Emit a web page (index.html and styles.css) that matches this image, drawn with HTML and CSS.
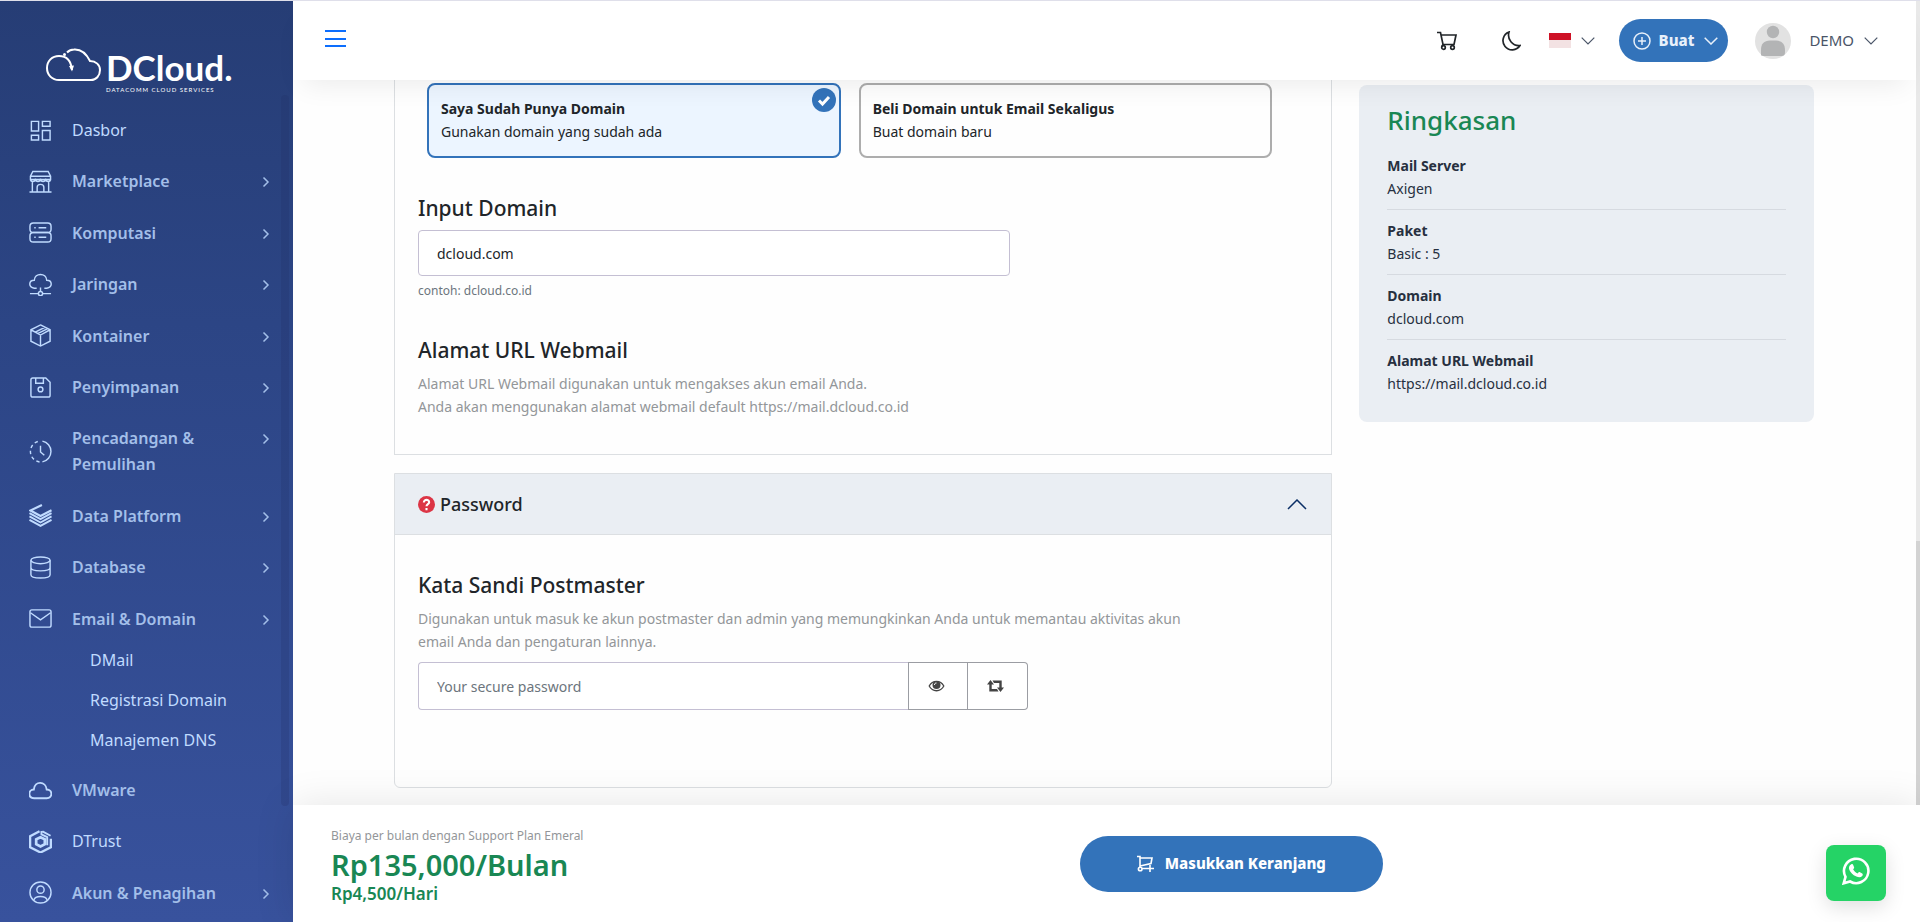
FILE: index.html
```html
<!DOCTYPE html>
<html lang="id">

<head>
    <meta charset="UTF-8">
    <meta name="viewport" content="width=device-width, initial-scale=1">
    <title>DCloud - DMail</title>
    <link rel="stylesheet" href="styles.css">
</head>

<body>

    <!-- shared icons -->
    <svg class="sprite" aria-hidden="true">
        <symbol id="right" viewBox="0 0 8 12"><path d="M1.5 1.5 6 6l-4.500 4.500" /></symbol>
        <symbol id="down" viewBox="0 0 14 8"><path d="m.7.7 6.300 6.300L13.300.7" /></symbol>
    </svg>

    <aside class="sidebar">
        <a class="logo" href="#">
            <svg class="logo-cloud" viewBox="0 0 56 34" aria-hidden="true">
                <path d="M26 22C25 12 20 8 13 8 6 8 1 13 1 20s5 12 12 12h32c5 0 9-4 9-10 0-5-4-9-10-9C40 5 35 1 28 1.500c-3 0-5 1-7 3" />
                <path class="solid" d="m23 18 3 5.500 2-6z" />
                <circle class="solid" cx="18.500" cy="6.500" r="1.500" />
            </svg>
            <span class="logo-text">
                <span class="logo-name">DCloud.</span>
                <span class="logo-tag">DATACOMM CLOUD SERVICES</span>
            </span>
        </a>

        <nav class="menu">
            <a class="item plain" href="#">
                <svg class="icon" viewBox="0 0 24 24"><path d="M2.500 2.500h7.500v10H2.500zM14 2.500h8v5h-8zM14 12h8v10h-8zM2.500 17h7.500v5H2.500z" /></svg>
                <span>Dasbor</span>
            </a>
            <a class="item" href="#">
                <svg class="icon" viewBox="0 0 24 24"><path d="M4 1.500h16l2.500 5v3.500H1.500V6.500zM1.500 6.500h21M1.500 9c0 4 5 4 5.200 0 .3 4 5 4 5.300 0 .3 4 5 4 5.300 0 .3 4 5.200 4 5.200 0M3.500 12v11M20.500 12v11M.5 23h23M8.500 23v-5c0-4 7-4 7 0v5" /></svg>
                <span>Marketplace</span>
                <svg class="arrow"><use href="#right" /></svg>
            </a>
            <a class="item" href="#">
                <svg class="icon" viewBox="0 0 24 24"><rect x="1" y="2" width="22" height="10" rx="3.500" /><rect x="1" y="12" width="22" height="10" rx="3.500" /><path d="M5.500 7H7M10 7h8M5.500 17H7M10 17h8" /></svg>
                <span>Komputasi</span>
                <svg class="arrow"><use href="#right" /></svg>
            </a>
            <a class="item" href="#">
                <svg class="icon" viewBox="0 0 24 24"><path d="M8 16H5.500C-1 15-.5 7.500 5.500 7.500 6-.5 18-.5 18.500 7.500c6 0 6.500 7.500 0 8.500H16M12 15v4M1 21.500h8.500M14.500 21.500H23" /><circle cx="12" cy="21.500" r="2.200" /></svg>
                <span>Jaringan</span>
                <svg class="arrow"><use href="#right" /></svg>
            </a>
            <a class="item" href="#">
                <svg class="icon" viewBox="0 0 24 24"><path d="m12 1 10 5v12l-10 5-10-5V6zM2 6l10 5.500L22 6M12 11.500V23M6.500 8.500l10-5M9 10l10-5" /></svg>
                <span>Kontainer</span>
                <svg class="arrow"><use href="#right" /></svg>
            </a>
            <a class="item" href="#">
                <svg class="icon" viewBox="0 0 24 24"><path d="M4 2h13.500L22 6.500V20a2 2 0 0 1-2 2H4a2 2 0 0 1-2-2V4a2 2 0 0 1 2-2zM7 2v5.500h8V2" /><circle cx="12" cy="14" r="2.500" /></svg>
                <span>Penyimpanan</span>
                <svg class="arrow"><use href="#right" /></svg>
            </a>
            <a class="item" href="#">
                <svg class="icon" viewBox="0 0 24 24"><path d="M14 1.200A11 11 0 0 1 14 22.800M12 6v6.500l4 3.500" /><path stroke-dasharray="3.500 3" d="M11 22.900A11 11 0 0 1 11 1.100" /></svg>
                <span>Pencadangan &amp; Pemulihan</span>
                <svg class="arrow"><use href="#right" /></svg>
            </a>
            <a class="item" href="#">
                <svg class="icon" viewBox="0 0 24 24"><path stroke-width="2.200" d="M13.500 1 1.500 6.800 12 12.500 23.500 6.500" /><path stroke-width="2" d="m.5 9.500 11.500 6.300L23.500 9.500M.5 13l11.500 6.300L23.500 13M.5 16.500 12 22.800l11.500-6.300" /></svg>
                <span>Data Platform</span>
                <svg class="arrow"><use href="#right" /></svg>
            </a>
            <a class="item" href="#">
                <svg class="icon" viewBox="0 0 24 24"><ellipse cx="12" cy="4.500" rx="10" ry="3.500" /><path d="M2 4.500v15c0 4.700 20 4.700 20 0v-15M2 12c0 4.700 20 4.700 20 0" /></svg>
                <span>Database</span>
                <svg class="arrow"><use href="#right" /></svg>
            </a>
            <div class="group">
                <a class="item" href="#">
                    <svg class="icon" viewBox="0 0 24 24"><rect x="1" y="3" width="22" height="18" rx="2" /><path d="m1.500 6 10.500 7.500L22.500 6" /></svg>
                    <span>Email &amp; Domain</span>
                    <svg class="arrow"><use href="#right" /></svg>
                </a>
                <div class="submenu">
                    <a href="#">DMail</a>
                    <a href="#">Registrasi Domain</a>
                    <a href="#">Manajemen DNS</a>
                </div>
            </div>
            <a class="item" href="#">
                <svg class="icon" viewBox="0 0 24 24"><path stroke-width="2" d="M5.500 20C-1.500 20-1 11 5 11 6 1.500 17.500 2 18.500 11c6.500 0 6.500 9 0 9z" /></svg>
                <span>VMware</span>
            </a>
            <a class="item plain" href="#">
                <svg class="icon" viewBox="0 0 24 24"><path stroke-width="2.400" d="M22.800 9v9L12 23.500 1.200 18V6.500L11 1.300" /><path stroke-width="2.800" d="m12 7.500-4.500 2.300v5L12 17.200l4.500-2.400v-5z" /><path stroke-width="2" d="M13 1v3.500l6 3V16M14 1.500l8.500 4.500" /></svg>
                <span>DTrust</span>
            </a>
            <a class="item" href="#">
                <svg class="icon" viewBox="0 0 24 24"><circle cx="12" cy="12" r="11" /><circle cx="12" cy="9" r="3.800" /><path d="M5 20c1.500-5 12.500-5 14 0" /></svg>
                <span>Akun &amp; Penagihan</span>
                <svg class="arrow"><use href="#right" /></svg>
            </a>
        </nav>
        <div class="sidebar-scroll"></div>
    </aside>

    <div class="page">
        <header class="header">
            <button class="icon-btn menu-toggle" aria-label="Menu">
                <svg class="burger" viewBox="0 0 21 18"><path d="M0 2h21M0 10h21M0 17h21" /></svg>
            </button>
            <div class="tools">
                <button class="icon-btn cart" aria-label="Keranjang">
                    <svg viewBox="0 0 20 20"><path d="M0 1.500h3.500L6 13.500h11L19 4H4M6 13.500l-1 2" /><circle cx="6.500" cy="16.500" r="1.800" /><circle cx="15.500" cy="16.500" r="1.800" /></svg>
                </button>
                <button class="icon-btn moon" aria-label="Mode gelap">
                    <svg viewBox="0 0 20 20"><path d="M8 1A9.200 9.200 0 1 0 19 14.500 10.500 10.500 0 0 1 8 1z" /></svg>
                </button>
                <button class="icon-btn lang" aria-label="Bahasa">
                    <span class="flag"></span>
                    <svg class="down"><use href="#down" /></svg>
                </button>
                <button class="create">
                    <svg class="plus" viewBox="0 0 18 18"><circle cx="9" cy="9" r="8" /><path d="M9 5v8M5 9h8" /></svg>
                    Buat
                    <svg class="down"><use href="#down" /></svg>
                </button>
                <button class="icon-btn user">
                    <svg class="avatar" viewBox="0 0 36 36"><circle cx="18" cy="18" r="18" fill="#e2e2e2" /><circle cx="18" cy="9" r="6.200" fill="#b3b4b5" /><path d="M6 32V27c0-6 3-9.500 9-9.500h6c6 0 9 3.500 9 9.500v2c0 3-1 4-4 4H10c-2.500 0-4-.3-4-1z" fill="#b3b4b5" /></svg>
                    DEMO
                    <svg class="down"><use href="#down" /></svg>
                </button>
            </div>
        </header>

        <main class="content">
            <form class="steps">
                <section class="card">
                    <div class="options">
                        <label class="option selected">
                            <input type="radio" name="domain_type" checked>
                            <b>Saya Sudah Punya Domain</b>
                            <span>Gunakan domain yang sudah ada</span>
                            <svg class="check" viewBox="0 0 24 24"><circle cx="12" cy="12" r="12" /><path d="m7 12.500 3.500 3.500L17 9" /></svg>
                        </label>
                        <label class="option">
                            <input type="radio" name="domain_type">
                            <b>Beli Domain untuk Email Sekaligus</b>
                            <span>Buat domain baru</span>
                        </label>
                    </div>

                    <label class="title" for="domain">Input Domain</label>
                    <input class="field" id="domain" type="text" value="dcloud.com">
                    <small class="hint">contoh: dcloud.co.id</small>

                    <h2 class="title">Alamat URL Webmail</h2>
                    <p class="desc">Alamat URL Webmail digunakan untuk mengakses akun email Anda.<br>
                        Anda akan menggunakan alamat webmail default https://mail.dcloud.co.id</p>
                </section>

                <section class="card accordion">
                    <button class="accordion-head" type="button">
                        <svg class="question" viewBox="0 0 18 18"><circle cx="9" cy="9" r="9" /><path d="M6.200 7c0-4 5.800-3.600 5.600-.3C11.700 8.600 9 8.600 9 10.800M9 12.800V15" /></svg>
                        Password
                        <svg class="up" viewBox="0 0 20 11"><path d="m1 10 9-9 9 9" /></svg>
                    </button>
                    <div class="accordion-body">
                        <label class="title" for="password">Kata Sandi Postmaster</label>
                        <p class="desc">Digunakan untuk masuk ke akun postmaster dan admin yang memungkinkan Anda untuk
                            memantau aktivitas akun email Anda dan pengaturan lainnya.</p>
                        <div class="input-group">
                            <input class="field" id="password" type="password" placeholder="Your secure password">
                            <button type="button" aria-label="Lihat password">
                                <svg viewBox="0 0 16 12"><path class="line" d="M.7 6C4-.3 12-.3 15.300 6 12 12.300 4 12.300.7 6z" /><circle cx="8" cy="5" r="4" /><path class="shine" d="M6 5c0-1.500.7-2 2-2" /></svg>
                            </button>
                            <button type="button" aria-label="Buat password">
                                <svg viewBox="0 0 17 12"><path d="M3.500 0 7 4.500H4.700V9H10l1.500 2.500H2.300v-7H0zM13.500 12 10 7.500h2.300V3H7L5.500.5h9.200v7H17z" /></svg>
                            </button>
                        </div>
                    </div>
                </section>
            </form>

            <aside class="summary">
                <h1>Ringkasan</h1>
                <dl>
                    <div><dt>Mail Server</dt><dd>Axigen</dd></div>
                    <div><dt>Paket</dt><dd>Basic : 5</dd></div>
                    <div><dt>Domain</dt><dd>dcloud.com</dd></div>
                    <div><dt>Alamat URL Webmail</dt><dd>https://mail.dcloud.co.id</dd></div>
                </dl>
            </aside>
        </main>

        <footer class="checkout">
            <div class="price">
                <small>Biaya per bulan dengan Support Plan Emeral</small>
                <strong>Rp135,000/Bulan</strong>
                <span>Rp4,500/Hari</span>
            </div>
            <button class="add-cart">
                <svg viewBox="0 0 17 17"><path d="M0 1.500h3v9.500M3 3h12l-1 5.500L3 11M3 11v2" /><circle cx="3.200" cy="14" r="1.800" /><path d="M5 13.500h12M13 10v7" /></svg>
                Masukkan Keranjang
            </button>
        </footer>
        <div class="page-scroll"><span></span></div>
    </div>

    <a class="whatsapp" href="#" aria-label="WhatsApp">
        <svg viewBox="0 0 28 28"><path class="line" d="m1.700 26.300 1.800-6.500A12.200 12.200 0 1 1 8.100 24.500z" /><path d="M9.300 7.300c.8-.5 1.500-.3 1.800.4l1 2.500c.2.600-.2 1.200-1 2 1 2 2.500 3.300 4.600 4.200.8-.9 1.200-1.600 1.900-1.300l2.600 1.300c.9.500.6 2 0 2.700-1.400 1.500-3.400 1.500-5.800.5C10.500 17.900 8.500 15.400 7.400 13c-1-2.300-.3-4.500 1.900-5.700z" /></svg>
    </a>

</body>

</html>
```

FILE: styles.css
```css
* {
    box-sizing: border-box;
}

body {
    margin: 0;
    height: 100vh;
    display: flex;
    overflow: hidden;
    border-top: 1px solid #dfdfea;
    background: #fefefe;
    color: #212529;
    font: 14px/23px "Noto Sans", "Open Sans", sans-serif;
}

a {
    color: inherit;
    text-decoration: none;
}

button,
input {
    font: inherit;
    color: inherit;
}

button {
    cursor: pointer;
}

svg {
    flex: none;
    fill: none;
    stroke: currentColor;
}

.sprite {
    position: absolute;
    width: 0;
    height: 0;
}

/* sidebar */
.sidebar {
    position: relative;
    flex: none;
    width: 293px;
    display: flex;
    flex-direction: column;
    padding-bottom: 4px;
    background: linear-gradient(#263d75, #2c4585 35%, #38529d);
    color: #a3bfe9;
}

.logo {
    display: flex;
    gap: 4px;
    height: 104px;
    padding: 47px 0 0 46px;
    color: #fff;
}

.logo-cloud {
    width: 56px;
    height: 34px;
    stroke-width: 2;
}

.solid {
    fill: currentColor;
    stroke: none;
}

.logo-text {
    display: flex;
    flex-direction: column;
    font-family: Lato, sans-serif;
}

.logo-name {
    font-size: 35px;
    font-weight: 700;
    line-height: 38px;
}

.logo-tag {
    font-size: 6px;
    line-height: 8px;
    letter-spacing: 1px;
}

.menu {
    flex: 1;
    display: flex;
    flex-direction: column;
    justify-content: space-between;
    font-size: 16px;
    line-height: 26px;
}

.item {
    display: flex;
    align-items: center;
    gap: 20px;
    padding: 12px 20px 12px 29px;
    font-weight: 600;
}

.item span {
    width: 150px;
}

.item.plain {
    color: #c0dbff;
    font-weight: 400;
}

.icon {
    width: 23px;
    height: 23px;
    color: #c0dbff;
    stroke-width: 1.5;
}

.arrow {
    align-self: flex-start;
    width: 8px;
    height: 12px;
    margin: 8px 0 0 20px;
    stroke-width: 1.5;
}

.submenu {
    display: flex;
    flex-direction: column;
    gap: 14px;
    padding: 3px 0 11px 90px;
    color: #c0dbff;
}

.sidebar-scroll {
    position: absolute;
    top: 94px;
    right: 4px;
    bottom: 116px;
    width: 8px;
    border-radius: 4px;
    background: rgba(30, 45, 100, 0.22);
}

/* header */
.page {
    position: relative;
    flex: 1;
    min-width: 0;
    display: flex;
    flex-direction: column;
    padding-right: 4px;
}

.header {
    position: relative;
    z-index: 1;
    display: flex;
    align-items: center;
    justify-content: space-between;
    height: 79px;
    padding: 0 38px 0 32px;
    background: #fff;
    box-shadow: 0 14px 28px -10px rgba(0, 0, 0, 0.08);
}

.icon-btn {
    display: flex;
    align-items: center;
    padding: 0;
    border: 0;
    background: none;
}

.menu-toggle {
    padding-bottom: 6px;
}

.burger {
    width: 21px;
    height: 18px;
    color: #0d6efd;
    stroke-width: 2;
}

.tools {
    display: flex;
    align-items: center;
    gap: 24px;
    color: #4a5568;
    font-size: 15px;
}

.cart svg,
.moon svg {
    width: 20px;
    height: 20px;
    color: #212529;
    stroke-width: 1.7;
}

.moon {
    margin: 0 4px 0 20px;
}

.lang {
    gap: 10px;
}

.flag {
    width: 22px;
    height: 15px;
    background: linear-gradient(#ce1126 50%, #f3e2e3 50%);
}

.down {
    width: 14px;
    height: 8px;
    stroke-width: 1.2;
}

.create {
    display: flex;
    align-items: center;
    gap: 8px;
    height: 43px;
    padding: 0 10px 0 14px;
    border: 0;
    border-radius: 22px;
    background: #3373ba;
    color: #e8f0fa;
    font-weight: 800;
}

.create .down {
    margin-left: 2px;
    stroke-width: 1.5;
}

.plus {
    width: 18px;
    height: 18px;
    stroke-width: 1.5;
}

.user .avatar {
    width: 36px;
    height: 36px;
    margin: 0 18px 0 3px;
    stroke: none;
}

.user .down {
    margin-left: 10px;
}

/* content */
.content {
    flex: 1;
    min-height: 0;
    display: grid;
    grid-template-columns: 939fr 455fr;
    gap: 27px;
    align-items: start;
    padding: 0 102px 0 101px;
}

.steps {
    display: flex;
    flex-direction: column;
    gap: 18px;
}

.card {
    padding: 3px 24px 36px 23px;
    border: 1px solid #dcdfe2;
    border-top: 0;
}

.options {
    display: grid;
    grid-template-columns: 1fr 1fr;
    gap: 18px;
    padding: 0 35px 0 9px;
    margin-bottom: 35px;
}

.option {
    position: relative;
    display: flex;
    flex-direction: column;
    padding: 12px 12px 13px;
    border: 2px solid #adadad;
    border-radius: 8px;
}

.option b,
.summary dt {
    font-weight: 700;
}

.option.selected {
    border-color: #3373ba;
    background: #ecf5ff;
}

.option input {
    position: absolute;
    opacity: 0;
}

.check {
    position: absolute;
    top: 3px;
    right: 3px;
    width: 24px;
    height: 24px;
    color: #fff;
    stroke-width: 3;
}

.check circle {
    fill: #3373ba;
    stroke: none;
}

.title {
    display: block;
    margin: 0 0 7px;
    font-size: 21px;
    font-weight: 500;
    line-height: 30px;
}

.field {
    display: block;
    width: 592px;
    height: 46px;
    padding: 0 18px;
    border: 1px solid #c4bfd3;
    border-radius: 4px;
    background: #fff;
    outline: 0;
}

.field::placeholder {
    color: #6c757d;
    opacity: 1;
}

.hint {
    display: block;
    margin: 3px 0 33px;
    color: #6c757d;
    font-size: 12px;
}

.desc {
    max-width: 790px;
    margin: 0;
    color: #939699;
}

.accordion {
    padding: 0;
    border-top: 1px solid #dcdfe2;
    border-radius: 0 0 6px 6px;
}

.accordion-head {
    width: 100%;
    height: 61px;
    display: flex;
    align-items: center;
    gap: 5px;
    padding: 0 24px 0 23px;
    border: 0;
    border-bottom: 1px solid #dcdfe2;
    background: #eaeef3;
    font-size: 18px;
    font-weight: 500;
}

.question {
    width: 17px;
    height: 17px;
    color: #fff;
    stroke-width: 2.2;
}

.question circle {
    fill: #dc3545;
    stroke: none;
}

.up {
    width: 20px;
    height: 11px;
    margin-left: auto;
    color: #0c2f66;
    stroke-width: 1.5;
}

.accordion-body {
    padding: 35px 24px 77px 23px;
}

.input-group {
    display: flex;
    width: 610px;
    margin-top: 9px;
}

.input-group .field {
    flex: 1;
    width: auto;
    height: 48px;
    border-right: 0;
    border-radius: 4px 0 0 4px;
}

.input-group button {
    width: 60px;
    padding: 0 10px 0 6px;
    border: 1px solid #9b9da3;
    background: #fff;
}

.input-group button:last-child {
    border-left: 0;
    border-radius: 0 4px 4px 0;
}

.input-group svg {
    width: 17px;
    height: 12px;
    fill: #444;
    stroke: none;
}

.input-group .line {
    fill: none;
    stroke: #444;
    stroke-width: 1.3;
}

.input-group .shine {
    fill: none;
    stroke: #fff;
}

.summary {
    margin-top: 5px;
    padding: 16px 28px 18px;
    border-radius: 8px;
    background: #eaeef3;
    color: #27303f;
}

.summary h1 {
    margin: 0 0 15px;
    color: #198754;
    font-size: 26px;
    font-weight: 500;
    line-height: 38px;
}

.summary dl,
.summary dd {
    margin: 0;
}

.summary dl div {
    padding-bottom: 9px;
}

.summary dl div + div {
    padding-top: 9px;
    border-top: 1px solid #d6dae0;
}

/* checkout bar */
.checkout {
    position: relative;
    z-index: 1;
    flex: none;
    display: flex;
    align-items: center;
    height: 117px;
    margin-right: -4px;
    padding-left: 40px;
    background: #fff;
    box-shadow: 0 0 40px rgba(0, 0, 0, 0.1);
}

.price {
    width: 47%;
    display: flex;
    flex-direction: column;
    padding-top: 2px;
    margin-left: -2px;
    margin-right: 3px;
    color: #198754;
    font-weight: 600;
}

.price small {
    color: #939699;
    font-size: 12px;
    font-weight: 400;
    line-height: 20px;
}

.price strong {
    font-size: 29px;
    font-weight: 600;
    line-height: 38px;
}

.price span {
    font-size: 17px;
    line-height: 20px;
}

.add-cart {
    display: flex;
    align-items: center;
    justify-content: center;
    gap: 11px;
    width: 303px;
    height: 56px;
    border: 0;
    border-radius: 28px;
    background: #3373ba;
    color: #fff;
    font-size: 15px;
    font-weight: 800;
}

.add-cart svg {
    width: 17px;
    height: 17px;
    stroke-width: 1.6;
}

.page-scroll {
    position: absolute;
    top: 0;
    right: 0;
    bottom: 117px;
    width: 4px;
    background: #e9e9e9;
}

.page-scroll span {
    position: absolute;
    bottom: 0;
    width: 100%;
    height: 264px;
    background: #d3d3d3;
}

.whatsapp {
    position: absolute;
    z-index: 2;
    right: 34px;
    bottom: 21px;
    display: flex;
    align-items: center;
    justify-content: center;
    width: 60px;
    height: 56px;
    border-radius: 8px;
    background: #25d366;
    color: #fff;
    box-shadow: 0 6px 20px rgba(0, 0, 0, 0.13);
}

.whatsapp svg {
    width: 28px;
    height: 28px;
    margin-bottom: 4px;
    fill: currentColor;
    stroke: none;
}

.whatsapp .line {
    fill: none;
    stroke: currentColor;
    stroke-width: 2.6;
}
```
